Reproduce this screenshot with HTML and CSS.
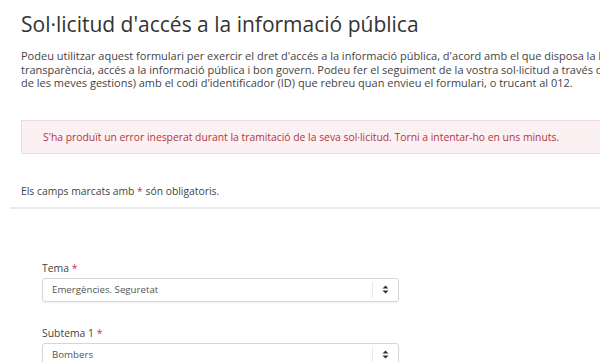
FILE: index.html
```html
<!DOCTYPE html>
<html lang="ca">
<head>
    <meta charset="UTF-8">
    <meta name="viewport" content="width=device-width, initial-scale=1.0">
    <title>Sol·licitud d'accés a la informació pública</title>
    <link rel="stylesheet" href="styles.css">
</head>
<body>
    <div id="page">
        <h1>Sol·licitud d'accés a la informació pública</h1>
        <p class="intro">
            Podeu utilitzar aquest formulari per exercir el dret d'accés a la informació pública, d'acord amb el que disposa la Llei 19/2014, del 29 de desembre, de<br>
            transparència, accés a la informació pública i bon govern. Podeu fer el seguiment de la vostra sol·licitud a través de l'apartat Estat<br>
            de les meves gestions) amb el codi d'identificador (ID) que rebreu quan envieu el formulari, o trucant al 012.
        </p>

        <div class="alert-error">
            S'ha produït un error inesperat durant la tramitació de la seva sol·licitud. Torni a intentar-ho en uns minuts.
        </div>

        <p class="required-note">Els camps marcats amb <span class="req">*</span> són obligatoris.</p>
        <hr>

        <form id="request-form">
            <div class="form-group">
                <label for="tema">Tema <span class="req">*</span></label>
                <div class="select-box">
                    <span class="select-value" id="tema">Emergències. Seguretat</span>
                    <span class="select-arrow">
                        <svg width="7" height="9" viewBox="0 0 7 9"><path d="M3.5 0.5 L6.5 3.6 H0.5 Z M3.5 8.5 L6.5 5.4 H0.5 Z" fill="#333"/></svg>
                    </span>
                </div>
            </div>
            <div class="form-group">
                <label for="subtema">Subtema 1 <span class="req">*</span></label>
                <div class="select-box">
                    <span class="select-value" id="subtema">Bombers</span>
                    <span class="select-arrow">
                        <svg width="7" height="9" viewBox="0 0 7 9"><path d="M3.5 0.5 L6.5 3.6 H0.5 Z M3.5 8.5 L6.5 5.4 H0.5 Z" fill="#333"/></svg>
                    </span>
                </div>
            </div>
        </form>
    </div>
</body>
</html>
```

FILE: styles.css
```css
body {
    font-family: "Open Sans", Arial, sans-serif;
    font-feature-settings: "locl" 0;
    background-color: #fff;
    color: #444;
    margin: 0;
    overflow: hidden;
}

#page {
    width: 760px;
    padding: 0 0 0 21px;
}

h1 {
    font-size: 21px;
    font-weight: normal;
    line-height: 23px;
    color: #333;
    margin: 13px 0 0;
}

.intro {
    font-size: 11px;
    line-height: 13.5px;
    white-space: nowrap;
    margin: 13px 0 0;
}

.alert-error {
    margin-top: 30px;
    padding: 9px 21px;
    font-size: 10.35px;
    line-height: 14px;
    color: #b3343e;
    background-color: #fcf1f2;
    border: 1px solid #f2d9dc;
}

.required-note {
    font-size: 10.35px;
    line-height: 14px;
    margin: 30px 0 0;
}

.req {
    color: #d0343f;
}

hr {
    border: none;
    border-top: 2px solid #ececec;
    margin: 9px 0 0 -11px;
}

#request-form {
    padding: 52px 0 0 21px;
}

.form-group {
    margin-bottom: 24px;
}

label {
    display: block;
    font-size: 10.4px;
    line-height: 14px;
    color: #444;
    margin-bottom: 3px;
}

.select-box {
    width: 355px;
    height: 22px;
    display: flex;
    align-items: center;
    border: 1px solid #d6d6d6;
    border-radius: 3px;
    box-shadow: 0 1px 2px rgba(0, 0, 0, 0.06);
}

.select-value {
    flex: 1;
    padding-left: 9px;
    font-size: 9.7px;
    color: #555;
}

.select-arrow {
    width: 25px;
    height: 16px;
    display: flex;
    align-items: center;
    justify-content: center;
    border-left: 1px solid #e8e8e8;
}
```
